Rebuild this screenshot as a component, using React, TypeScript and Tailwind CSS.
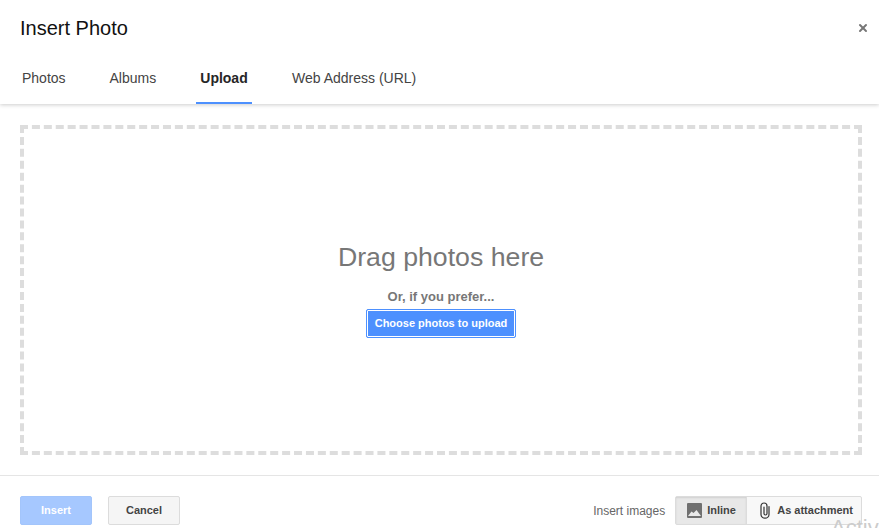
import { X } from "lucide-react";

const tabs = [
  { label: "Photos", width: "w-[87.5px]", active: false },
  { label: "Albums", width: "w-[86.5px]", active: false },
  { label: "Upload", width: "w-[56px]", active: true },
];

function Tab({ label, className, active }: { label: string; className: string; active?: boolean }) {
  return (
    <div
      className={
        active
          ? "flex h-[47px] items-center justify-center border-b-2 border-[#4d90fe] pb-[2px] text-[14px] font-bold text-[#262626] " + className
          : "flex h-[47px] items-center pb-[4px] text-[14px] text-[#444444] " + className
      }
    >
      {label}
    </div>
  );
}

export default function App() {
  return (
    <div className="relative h-[528px] w-[879px] overflow-hidden bg-white font-['Liberation_Sans',Arial,sans-serif]">
      <header className="relative z-10 h-[104px] bg-white shadow-[0_1px_4px_rgba(0,0,0,0.2)]">
        <div className="flex h-[57px] items-center justify-between pb-[2px] pl-[20px] pr-[11px]">
          <h1 className="text-[20px] font-normal leading-none text-[#111111]">Insert Photo</h1>
          <X className="h-[12px] w-[12px] translate-x-[1px] text-[#777777]" strokeWidth={4} />
        </div>
        <nav className="flex pl-[22px]">
          {tabs.map((t) => (
            <Tab key={t.label} label={t.label} active={t.active} className={t.width} />
          ))}
          <Tab label="Web Address (URL)" className="ml-[40px]" />
        </nav>
      </header>

      <main className="flex h-[372px] flex-col border-b border-[#e5e5e5] pb-[20px] pl-[20px] pr-[17px] pt-[21px]">
        <div className="flex h-[330px] flex-col items-center border-4 border-dashed border-[#dddddd] pt-[112px]">
          <h2 className="text-[26.7px] font-normal leading-[32px] text-[#777777]">Drag photos here</h2>
          <p className="mt-[16px] text-[13px] font-bold leading-[15px] text-[#777777]">Or, if you prefer...</p>
          <button className="mt-[5px] h-[29px] w-[150px] rounded-[2px] border border-[#4d90fe] bg-[#4d90fe] text-[11px] font-bold text-white shadow-[inset_0_0_0_1px_white]">
            Choose photos to upload
          </button>
        </div>
      </main>

      <footer className="flex items-center justify-between pl-[20px] pr-[17px] pt-[20px]">
        <div className="flex gap-[16px]">
          <button className="h-[29px] w-[72px] rounded-[2px] border border-[#a3c5fb] bg-[#a6c8ff] text-[11px] font-bold text-white">
            Insert
          </button>
          <button className="h-[29px] w-[72px] rounded-[2px] border border-[#dcdcdc] bg-[#f5f5f5] text-[11px] font-bold text-[#444444]">
            Cancel
          </button>
        </div>
        <div className="flex items-center">
          <span className="mr-[10px] text-[12px] text-[#666666]">Insert images</span>
          <div className="flex h-[29px] rounded-[2px] border border-[#dcdcdc] bg-[#f8f8f8]">
            <div className="flex w-[71px] items-center gap-[5px] border-r border-[#dcdcdc] bg-[#e8e8e8] pl-[11px] text-[11px] font-bold text-[#444444] shadow-[inset_0_1px_2px_rgba(0,0,0,0.1)]">
              <svg width="15" height="15" viewBox="0 0 15 15">
                <rect width="15" height="15" rx="1" fill="#707070" />
                <path d="M1 13 L4.5 8.5 L6.5 10 L9.5 7 L14 13 Z" fill="#e8e8e8" />
              </svg>
              Inline
            </div>
            <div className="flex flex-1 items-center gap-[5px] pl-[12px] pr-[8px] text-[11px] font-bold text-[#444444]">
              <svg width="13" height="17" viewBox="0 0 13 17" fill="none" stroke="#333333" strokeWidth="1.2" strokeLinecap="round">
                <path d="M10 4.5 V12.5 A4 3.7 0 0 1 2 12.5 V4 A3 3 0 0 1 8 4 V11.5 A1.5 1.5 0 0 1 5 11.5 V5" />
              </svg>
              As attachment
            </div>
          </div>
        </div>
      </footer>

      <span className="absolute left-[831px] top-[515px] text-[22px] leading-[26px] text-[#cccccc]">Activ</span>
    </div>
  );
}
